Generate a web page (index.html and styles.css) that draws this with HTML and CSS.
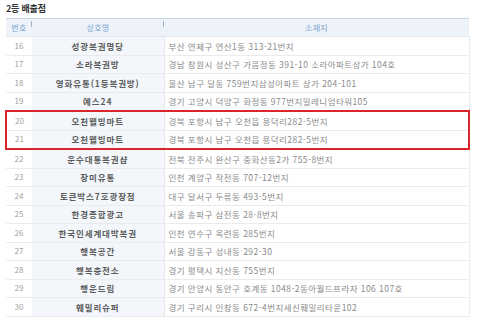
FILE: index.html
```html
<!DOCTYPE html>
<html lang="ko">
<head>
<meta charset="utf-8">
<link rel="stylesheet" href="styles.css">
</head>
<body>
<div class="page">
  <h2 class="title">2등 배출점</h2>
  <table class="list">
    <colgroup>
      <col class="c-no">
      <col class="c-name">
      <col class="c-addr">
    </colgroup>
    <thead>
      <tr><th class="sep">번호</th><th class="sep">상호명</th><th class="end">소재지</th></tr>
    </thead>
    <tbody>
      <tr><td class="no">16</td><td class="name">성광복권명당</td><td class="addr">부산 연제구 연산1동 313-21번지</td></tr>
      <tr><td class="no">17</td><td class="name">소라복권방</td><td class="addr">경남 창원시 성산구 가음정동 391-10 소라아파트상가 104호</td></tr>
      <tr><td class="no">18</td><td class="name">영화유통(1등복권방)</td><td class="addr">울산 남구 달동 759번지삼성아파트 상가 204-101</td></tr>
      <tr><td class="no">19</td><td class="name">예스24</td><td class="addr">경기 고양시 덕양구 화정동 977번지밀레니엄타워105</td></tr>
      <tr class="hl hl-top"><td class="no">20</td><td class="name">오천웰빙마트</td><td class="addr">경북 포항시 남구 오천읍 용덕리282-5번지</td></tr>
      <tr class="hl hl-bottom"><td class="no">21</td><td class="name">오천웰빙마트</td><td class="addr">경북 포항시 남구 오천읍 용덕리282-5번지</td></tr>
      <tr><td class="no">22</td><td class="name">운수대통복권샵</td><td class="addr">전북 전주시 완산구 중화산동2가 755-8번지</td></tr>
      <tr><td class="no">23</td><td class="name">장미유통</td><td class="addr">인천 계양구 작전동 707-12번지</td></tr>
      <tr><td class="no">24</td><td class="name">토큰박스7호광장점</td><td class="addr">대구 달서구 두류동 493-5번지</td></tr>
      <tr><td class="no">25</td><td class="name">한경종합광고</td><td class="addr">서울 송파구 삼전동 28-8번지</td></tr>
      <tr><td class="no">26</td><td class="name">한국인세계대박복권</td><td class="addr">인천 연수구 옥련동 285번지</td></tr>
      <tr><td class="no">27</td><td class="name">행복공간</td><td class="addr">서울 강동구 성내동 292-30</td></tr>
      <tr><td class="no">28</td><td class="name">행복충전소</td><td class="addr">경기 평택시 지산동 755번지</td></tr>
      <tr><td class="no">29</td><td class="name">행운드림</td><td class="addr">경기 안양시 동안구 호계동 1048-2동아월드프라자 106 107호</td></tr>
      <tr><td class="no">30</td><td class="name">훼밀리슈퍼</td><td class="addr">경기 구리시 인창동 672-4번지세신훼밀리타운102</td></tr>
    </tbody>
  </table>
</div>
</body>
</html>
```

FILE: styles.css
```css
html, body {
  margin: 0;
  padding: 0;
  background: #ffffff;
}
body {
  font-family: "Noto Sans CJK KR", "Noto Sans", sans-serif;
  color: #666;
}
.page {
  padding: 3px 12px 0 5px;
}
.title {
  margin: 0 0 0 1px;
  height: 15px;
  font-size: 9px;
  line-height: 11px;
  font-weight: bold;
  color: #333;
  letter-spacing: -0.2px;
}
.list {
  width: 463px;
  border-collapse: collapse;
  table-layout: fixed;
}
.c-no { width: 26px; }
.c-name { width: 132px; }
.c-addr { width: 305px; }
.list th {
  height: 17px;
  padding: 0;
  background: #eef3f9;
  border-top: 1px solid #c8d5e5;
  border-bottom: 1px solid #e2e8ef;
  color: #7da2cc;
  font-size: 8px;
  line-height: 1;
  font-weight: normal;
  text-align: center;
  letter-spacing: 0.3px;
  position: relative;
}
.list th.sep::after {
  content: "";
  position: absolute;
  right: 0;
  top: 2px;
  width: 1px;
  height: 6px;
  background: #9fb3c9;
}
.list td {
  height: 17.5px;
  padding: 0;
  border-bottom: 1px solid #ebebeb;
  font-size: 8.5px;
  line-height: 1;
  white-space: nowrap;
}
.list td.no {
  text-align: center;
  color: #a0a0a0;
  background: #ffffff;
  font-size: 8px;
}
.list td.name {
  text-align: center;
  font-weight: bold;
  color: #5c5c5c;
  background: #f3f7fb;
  border-right: 1px solid #e6e6e6;
  letter-spacing: 0.9px;
}
.list td.addr {
  padding-left: 4px;
  color: #8a8a8a;
  border-right: 1px solid #ececec;
  letter-spacing: 0.45px;
}
.list tr.hl td.no { border-left: 2px solid #d8262a; }
.list tr.hl td.addr { border-right: 2px solid #d8262a; }
.list tr.hl-top td { border-top: 2px solid #d8262a; }
.list tr.hl-bottom td { border-bottom: 2px solid #d8262a; }
```
